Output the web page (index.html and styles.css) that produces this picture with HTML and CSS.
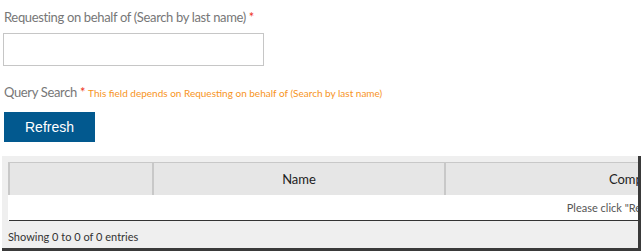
FILE: index.html
```html
<!DOCTYPE html>
<html lang="en">
<head>
    <meta charset="UTF-8">
    <title>Query Search</title>
    <link rel="stylesheet" href="styles.css">
</head>
<body>
    <div class="field">
        <label class="field-label">Requesting on behalf of (Search by last name) <span class="req">*</span></label>
        <input type="text" class="text-input">
    </div>
    <div class="field query">
        <label class="field-label">Query Search <span class="req">*</span> <span class="hint">This field depends on Requesting on behalf of (Search by last name)</span></label>
        <button class="btn-refresh">Refresh</button>
    </div>
    <div class="results">
        <table class="grid">
            <thead>
                <tr>
                    <th class="col-a"></th>
                    <th class="col-b">Name</th>
                    <th class="col-c">Company</th>
                    <th class="col-d">Email</th>
                </tr>
            </thead>
            <tbody>
                <tr>
                    <td colspan="4" class="empty">Please click "Refresh" button to load the data.</td>
                </tr>
            </tbody>
        </table>
        <div class="info">Showing 0 to 0 of 0 entries</div>
    </div>
</body>
</html>
```

FILE: styles.css
```css
body {
    margin: 0;
    padding: 0;
    background: #fff;
    font-family: Lato, "Open Sans", sans-serif;
    width: 644px;
    height: 252px;
    overflow: hidden;
}

.field {
    padding: 7px 0 0 4px;
}

.field-label {
    display: block;
    font-size: 13px;
    letter-spacing: -0.35px;
    color: #777;
    line-height: 20px;
}

.req {
    color: #e32;
}

.text-input {
    display: block;
    margin: 6px 0 0 -1px;
    width: 261px;
    height: 33px;
    box-sizing: border-box;
    border: 1px solid #c6c6c6;
}

.query {
    padding-top: 16px;
}

.hint {
    color: #f7941d;
    font-size: 10px;
    letter-spacing: 0;
}

.btn-refresh {
    display: block;
    margin-top: 9px;
    width: 91px;
    height: 30px;
    background: #02598f;
    color: #fff;
    border: none;
    font-family: "Liberation Sans", Arial, sans-serif;
    font-size: 14px;
}

.results {
    margin: 14px 0 0 2px;
    width: 639px;
    height: 95px;
    background: #efefef;
    border-right: 3px solid #3a3a3a;
    border-bottom: 3px solid #3a3a3a;
    padding: 6px 0 0 6px;
    box-sizing: border-box;
    overflow: hidden;
}

.grid {
    width: 1336px;
    border-collapse: collapse;
    background: #fff;
    font-size: 13px;
    color: #222;
}

.grid th {
    background: #e6e6e6;
    border-top: 1px solid #c8c8c8;
    border-left: 2px solid #c8c8c8;
    border-right: 1px solid #c8c8c8;
    height: 32px;
    padding: 0;
    font-weight: normal;
}

.col-a { width: 142px; }
.col-b { width: 290px; }
.col-c { width: 380px; }

.grid td.empty {
    height: 25px;
    padding: 0;
    border-bottom: 1px solid #333;
    text-align: center;
    font-size: 11px;
    color: #555;
}

.info {
    font-size: 11px;
    color: #333;
    padding: 9px 0 0 0;
}
```
